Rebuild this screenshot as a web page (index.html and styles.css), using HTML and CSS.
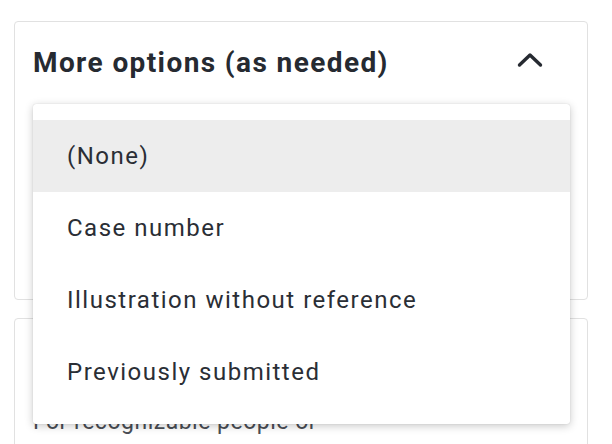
FILE: index.html
```html
<!DOCTYPE html>
<html lang="en">
<head>
<meta charset="utf-8">
<title>More options</title>
<link rel="stylesheet" href="styles.css">
</head>
<body>
<main class="page">
  <section class="card card-options">
    <header class="card-head">
      <h2 class="card-title">More options (as needed)</h2>
      <button class="toggle" aria-label="Collapse">
        <svg class="chevron" width="26" height="16" viewBox="0 0 26 16" aria-hidden="true">
          <polyline points="2.5,13 13,3 23.5,13" fill="none" stroke="currentColor" stroke-width="3.4" stroke-linecap="round" stroke-linejoin="round"/>
        </svg>
      </button>
    </header>
    <ul class="menu" role="listbox">
      <li class="menu-item is-active">(None)</li>
      <li class="menu-item">Case number</li>
      <li class="menu-item">Illustration without reference</li>
      <li class="menu-item">Previously submitted</li>
    </ul>
  </section>
  <section class="card card-people">
    <p class="card-text">For recognizable people or</p>
  </section>
</main>
</body>
</html>
```
FILE: styles.css
```css
* { box-sizing: border-box; }
html, body { margin: 0; padding: 0; background: #fff; }
body {
  font-family: Roboto, "Liberation Sans", sans-serif;
  color: #2a2e35;
  overflow: hidden;
  height: 444px;
}
.page {
  padding: 21px 24px 0 14px;
  display: flex;
  flex-direction: column;
  gap: 18px;
}
.card {
  border: 1px solid #e1e1e1;
  border-radius: 4px;
  background: #fff;
  padding: 0 18px;
}
.card-options {
  position: relative;
  height: 279px;
}
.card-head {
  display: flex;
  align-items: center;
  justify-content: space-between;
  height: 80px;
}
.card-title {
  margin: 0;
  font-size: 28px;
  font-weight: 700;
  letter-spacing: 1.4px;
  color: #262a31;
}
.toggle {
  border: 0;
  background: none;
  padding: 0;
  margin-right: 26px;
  margin-top: -4px;
  color: #262a31;
  display: flex;
}
.menu {
  position: absolute;
  top: 82px;
  left: 18px;
  width: 537px;
  margin: 0;
  padding: 16px 0;
  list-style: none;
  background: #fff;
  border-radius: 3px;
  box-shadow: 0 2px 8px rgba(0, 0, 0, 0.22), 0 0 1px rgba(0, 0, 0, 0.2);
  z-index: 2;
}
.menu-item {
  height: 72px;
  display: flex;
  align-items: center;
  padding-left: 34px;
  font-size: 24px;
  letter-spacing: 1.5px;
  color: #2a2e35;
}
.menu-item.is-active { background: #ededed; }
.card-people {
  height: 200px;
  padding-top: 89px;
}
.card-text {
  margin: 0;
  font-size: 23px;
  letter-spacing: 0.5px;
  color: #4a4e55;
}
```
